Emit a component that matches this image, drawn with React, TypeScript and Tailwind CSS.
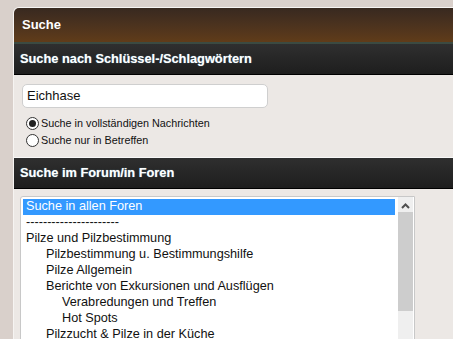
import React from 'react';

const forums = [
  { label: 'Suche in allen Foren', level: 0, selected: true },
  { label: '----------------------', level: 0 },
  { label: 'Pilze und Pilzbestimmung', level: 0 },
  { label: 'Pilzbestimmung u. Bestimmungshilfe', level: 1 },
  { label: 'Pilze Allgemein', level: 1 },
  { label: 'Berichte von Exkursionen und Ausflügen', level: 1 },
  { label: 'Verabredungen und Treffen', level: 2 },
  { label: 'Hot Spots', level: 2 },
  { label: 'Pilzzucht & Pilze in der Küche', level: 1 },
];

const indent = ['pl-[3px]', 'pl-[23px]', 'pl-[39px]'];

const Radio = ({ checked, label }: { checked?: boolean; label: string }) => (
  <label className="flex items-center h-[17px]">
    <span className="w-[13px] h-[13px] rounded-full border border-[#333] bg-white flex items-center justify-center mr-[2px]">
      {checked && <span className="w-[7px] h-[7px] rounded-full bg-[#222]" />}
    </span>
    <span className="text-[10.8px] text-[#111]">{label}</span>
  </label>
);

const DarkBar = ({ title }: { title: string }) => (
  <div className="h-[31px] bg-gradient-to-b from-[#2f2f2f] to-[#1e1e1e] border-b border-black flex items-center px-[6px]">
    <span className="text-[12.8px] font-bold text-white [text-shadow:0_0_1px_#7ab]">{title}</span>
  </div>
);

export default function App() {
  return (
    <div className="w-[453px] h-[339px] overflow-hidden bg-[#d9d0cb] pl-[13px] pt-[7px] font-['Liberation_Sans',sans-serif]">
      <div className="h-full bg-[#ece8e5] rounded-tl-[6px] border-l border-t border-[#f6f4f2] overflow-hidden">
        <div className="h-[34px] bg-gradient-to-b from-[#382920] to-[#603c19] flex items-center px-[8px]">
          <span className="text-[13px] font-bold text-white">Suche</span>
        </div>
        <div className="h-[2px] bg-[#3b4a41]" />
        <DarkBar title="Suche nach Schlüssel-/Schlagwörtern" />

        <div className="pt-[9px] pl-[8px] pb-[8px]">
          <div className="w-[246px] h-[24px] bg-white border border-[#cfcfcf] rounded-[5px] flex items-center px-[4px]">
            <span className="text-[13px] text-[#111]">Eichhase</span>
          </div>
          <div className="mt-[7px] pl-[4px]">
            <Radio checked label="Suche in vollständigen Nachrichten" />
            <Radio label="Suche nur in Betreffen" />
          </div>
        </div>

        <div className="h-px bg-[#f8f8f8]" />
        <DarkBar title="Suche im Forum/in Foren" />

        <div className="pt-[7px] pl-[6px]">
          <div className="w-[395px] h-[200px] bg-white border border-[#c8c8c8] rounded-tl-[3px] flex">
            <div className="flex-1 pt-[2px] pl-[2px] pr-[3px]">
              {forums.map((f, i) => (
                <div
                  key={i}
                  className={`h-[16px] flex items-center text-[12.7px] whitespace-nowrap ${indent[f.level]} ${
                    f.selected ? 'bg-[#3399ff] text-white' : 'text-[#111]'
                  }`}
                >
                  {f.label}
                </div>
              ))}
            </div>
            <div className="w-[15px] mr-[1px] bg-[#efefef] flex flex-col">
              <div className="h-[15px] flex items-center justify-center pt-[2px]">
                <svg width="9" height="6" viewBox="0 0 9 6">
                  <path d="M1 5 L4.5 1.5 L8 5" stroke="#505050" strokeWidth="2" fill="none" />
                </svg>
              </div>
              <div className="h-[99px] bg-[#cdcdcd]" />
            </div>
          </div>
        </div>
      </div>
    </div>
  );
}
